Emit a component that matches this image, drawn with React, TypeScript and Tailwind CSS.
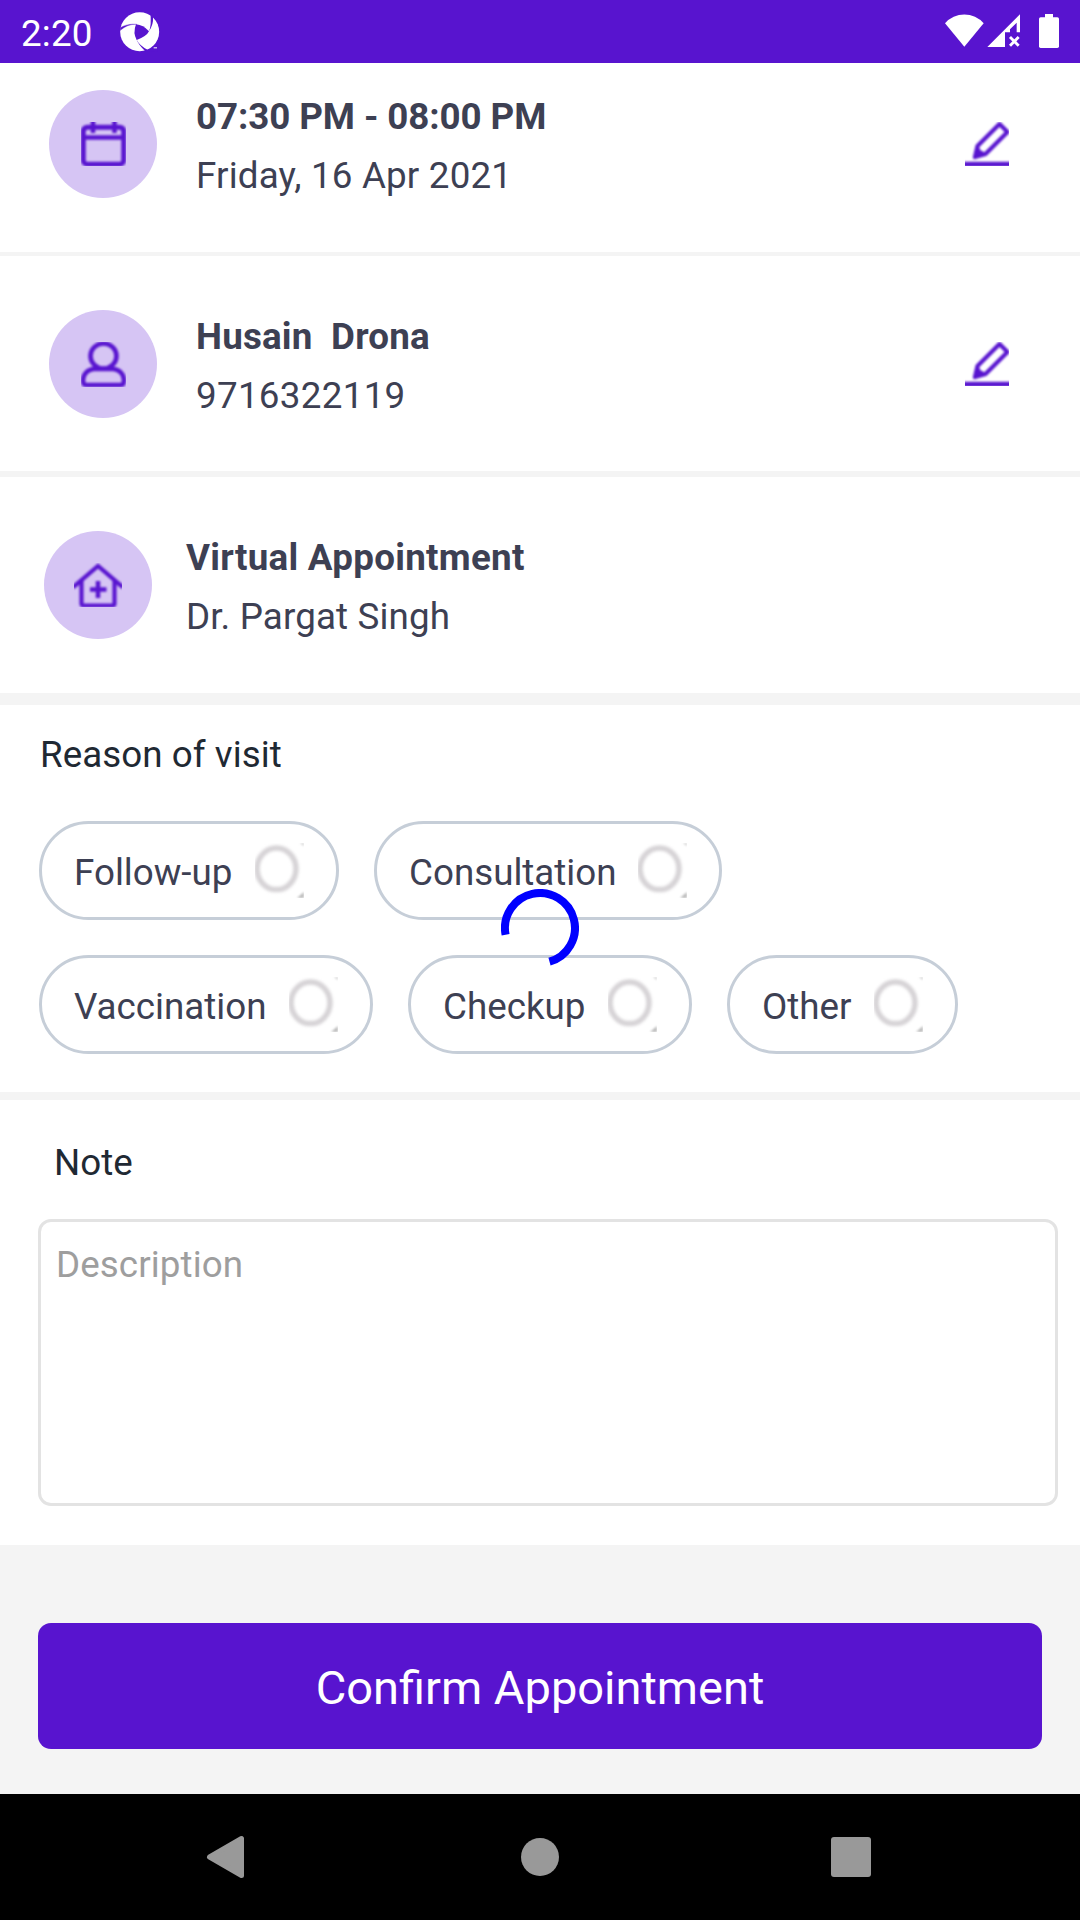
import type { ReactNode } from "react";

const PURPLE = "#5814cf";

function Logo() {
  return (
    <svg className="h-[40px] w-[40px]" viewBox="360 35 120 120">
      <circle cx="419" cy="94.5" r="58.5" fill="#fff" />
      <path d="M408 72 Q430 74 447 93 Q440 108 410 119 Q398 98 408 72Z" fill={PURPLE} />
      <path d="M447 93 Q455 75 451 36 L459 50 Q461 72 447 93Z" fill={PURPLE} />
      <path d="M410 72 Q384 70 361 90 L361 82 Q382 69 410 72Z" fill={PURPLE} stroke={PURPLE} strokeWidth="1" />
      <path d="M409 117 Q417 136 436 153 L444 149 Q420 138 409 117Z" fill={PURPLE} />
      <path d="M441 149 Q455 146 460 142 L461 139 Q466 138 470 134 L478 140 L472 152 L443 156Z" fill={PURPLE} />
      <path d="M461 142.500H471" stroke="#fff" strokeWidth="3" />
    </svg>
  );
}

function StatusBar() {
  return (
    <header className="flex h-[63px] shrink-0 items-start bg-[#5814cf] text-white">
      <span className="ml-[21px] mt-[12px] w-[78px] text-[36.75px] leading-[43px] tracking-[0.2px]">2:20</span>
      <div className="ml-[21px] mt-[11.500px]">
        <Logo />
      </div>
      <svg className="ml-auto mr-[20px] mt-[13px] h-[36px] w-[116px]" viewBox="132 39 348 108" fill="#fff">
        <path d="M193 140 L135 70 A77 77 0 0 1 251 70Z" />
        <path d="M262 141 L360 43 V97 H350 V68 L330 88 V97 H315 V141Z" />
        <path d="M330 111 L356 137 M356 111 L330 137" stroke="#fff" strokeWidth="8.500" />
        <rect x="417" y="52" width="60" height="92" rx="5" />
        <rect x="435" y="42" width="24" height="14" />
      </svg>
    </header>
  );
}

function CalendarIcon() {
  return (
    <div className="h-[44px] w-[45px] overflow-hidden">
      <svg className="h-[44px] w-[45px] overflow-visible blur-[0.8px]" viewBox="0 0 45 44" fill="none" stroke={PURPLE} strokeWidth="4.500">
        <rect x="2.300" y="5.200" width="40.400" height="37" rx="4" strokeWidth="5" />
        <path d="M2 15.500H43" strokeWidth="4.500" />
        <path d="M12 -2V11M33.500 -2V11" />
      </svg>
    </div>
  );
}

function PersonIcon() {
  return (
    <div className="h-[45px] w-[45px] overflow-hidden">
      <svg className="h-[45px] w-[45px] overflow-visible blur-[0.8px]" viewBox="0 0 45 45" fill="none" stroke={PURPLE} strokeWidth="4.600">
        <ellipse cx="22.500" cy="14" rx="13" ry="12.500" />
        <path d="M12.500 27 C6 27.500 2 33 2 38.500 C2 42 3.500 43 5.500 43 H39.500 C41.500 43 43 42 43 38.500 C43 33 39 27.500 32.500 27Z" />
      </svg>
    </div>
  );
}

function HouseIcon() {
  return (
    <div className="h-[44px] w-[48px] overflow-hidden">
      <svg className="h-[45px] w-[48px] overflow-visible blur-[0.8px]" viewBox="0 0 48 45" fill="none" stroke={PURPLE} strokeWidth="4.200">
        <path d="M-1 24.300 L24 3 L49 24.300" />
        <path d="M7.500 18V40.500Q7.500 42.500 9.500 42.500H38.500Q40.500 42.500 40.500 40.500V18" />
        <path d="M24 18V35M16 26.500H32.500" strokeWidth="4.500" />
      </svg>
    </div>
  );
}

function PencilIcon() {
  return (
    <div className="h-[44px] w-[44px] overflow-hidden">
      <svg className="h-[44px] w-[44px] overflow-visible blur-[0.8px]" viewBox="0 0 44 44" fill="none" stroke={PURPLE} strokeWidth="4.200" strokeLinejoin="round">
        <path d="M10 35 L12.500 24 L34.500 2 L42.500 10 L20.500 32Z" />
        <path d="M12.500 25.500 L19 32 L9 36Z" fill={PURPLE} strokeWidth="2" />
        <path d="M15.500 26.500 L17 28.500" stroke="#fff" strokeWidth="2" />
        <path d="M-2 42.200H46" strokeWidth="5" />
      </svg>
    </div>
  );
}

interface RowProps {
  icon: ReactNode;
  title: string;
  subtitle: string;
  className: string;
  gap: string;
  titleTracking: string;
  subtitleTracking: string;
  editable?: boolean;
}

function DetailRow({ icon, title, subtitle, className, gap, titleTracking, subtitleTracking, editable }: RowProps) {
  return (
    <section className={`flex shrink-0 items-start border-[#f4f4f4] bg-white pr-[71px] ${className}`}>
      <div className="flex h-[108px] w-[108px] items-center justify-center rounded-full bg-[#d6c5f4]">{icon}</div>
      <div className={`mt-[5px] flex flex-col gap-4 whitespace-pre text-[36.75px] leading-[43px] text-[#3d4053] ${gap}`}>
        <h2 className={`font-bold ${titleTracking}`}>{title}</h2>
        <p className={subtitleTracking}>{subtitle}</p>
      </div>
      {editable && (
        <button className="ml-auto mt-[32px]" aria-label="Edit">
          <PencilIcon />
        </button>
      )}
    </section>
  );
}

function Radio() {
  return (
    <svg className="h-[55px] w-[49px]" viewBox="0 0 49 55">
      <ellipse className="blur-[1.6px]" cx="21.500" cy="25.800" rx="19.500" ry="20.800" fill="none" stroke="#d6d3d6" strokeWidth="5.500" />
      <path className="blur-[1.3px]" d="M49 49V55H42Z" fill="#bbb" />
      <path className="blur-[1px]" d="M45 0H49V3Z" fill="#ccc" />
    </svg>
  );
}

function Chip({ label, width }: { label: string; width: string }) {
  return (
    <button className={`flex h-[99px] items-center justify-between rounded-full border-[3px] border-[#c6ced8] pl-[32px] pr-[32px] text-[36.75px] leading-[43px] text-[#3d4053] ${width}`}>
      <span className="mt-[4px]">{label}</span>
      <Radio />
    </button>
  );
}

export default function App() {
  return (
    <div className="relative flex h-[1920px] w-[1080px] flex-col overflow-hidden bg-[#f4f4f4] font-[Roboto,sans-serif]">
      <StatusBar />
      <DetailRow editable icon={<CalendarIcon />} title="07:30 PM - 08:00 PM" subtitle="Friday, 16 Apr 2021" className="h-[193px] border-b-4 pl-[49px] pt-[27px]" gap="ml-[39px]" titleTracking="tracking-[-0.1px]" subtitleTracking="tracking-[0.18px]" />
      <DetailRow editable icon={<PersonIcon />} title="Husain  Drona" subtitle="9716322119" className="h-[221px] border-b-[6px] pl-[49px] pt-[54px]" gap="ml-[39px]" titleTracking="tracking-[0.18px]" subtitleTracking="tracking-[0.3px]" />
      <DetailRow icon={<HouseIcon />} title="Virtual Appointment" subtitle="Dr. Pargat Singh" className="h-[228px] border-b-[12px] pl-[44px] pt-[54px]" gap="ml-[34px]" titleTracking="tracking-[0.28px]" subtitleTracking="tracking-[0.13px]" />

      <section className="h-[395px] shrink-0 border-b-8 border-[#f4f4f4] bg-white pl-[39px] pt-[28px]">
        <h3 className="pl-px text-[36.75px] leading-[43px] tracking-[0.05px] text-[#1f2933]">Reason of visit</h3>
        <div className="mt-[45px] flex flex-col gap-[35px]">
          <div className="flex gap-[35px]">
            <Chip label="Follow-up" width="w-[300px]" />
            <Chip label="Consultation" width="w-[348px]" />
          </div>
          <div className="flex gap-[35px]">
            <Chip label="Vaccination" width="w-[334px]" />
            <Chip label="Checkup" width="w-[284px]" />
            <Chip label="Other" width="w-[231px]" />
          </div>
        </div>
      </section>

      <section className="h-[445px] shrink-0 bg-white pl-[38px] pr-[22px] pt-[41px]">
        <h3 className="pl-[16px] text-[36.75px] leading-[43px] text-[#1f2933]">Note</h3>
        <textarea
          placeholder="Description"
          className="mt-[35px] block h-[287px] w-full resize-none rounded-[13px] border-[3px] border-[#e3e3e3] px-[15px] pt-[21px] text-[36.75px] leading-[43px] tracking-[0.1px] outline-none placeholder:text-[#9e9e9e]"
        />
      </section>

      <div className="flex grow flex-col px-[38px] pt-[78px]">
        <button className="flex h-[126px] items-center justify-center rounded-[13px] bg-[#5814cf] pt-[3px] text-[47px] leading-[55px] text-white">Confirm Appointment</button>
      </div>

      <nav className="flex h-[126px] shrink-0 items-center bg-black">
        <svg className="ml-[206px] h-[44px] w-[39px]" viewBox="0 0 39 44">
          <path d="M3.500 22 L35.500 3.500 V40.500Z" fill="#999" stroke="#999" strokeWidth="5" strokeLinejoin="round" />
        </svg>
        <div className="ml-[276px] h-[38px] w-[38px] rounded-full bg-[#999]" />
        <div className="ml-[272px] h-[40px] w-[40px] rounded-[3px] bg-[#999]" />
      </nav>

      <svg className="absolute left-[501px] top-[889px] h-[78px] w-[78px]" viewBox="0 0 78 78" fill="none">
        <path d="M4.600 45.700 A35 35 0 1 1 48.500 72.700" stroke="#0000ff" strokeWidth="8" />
      </svg>
    </div>
  );
}
